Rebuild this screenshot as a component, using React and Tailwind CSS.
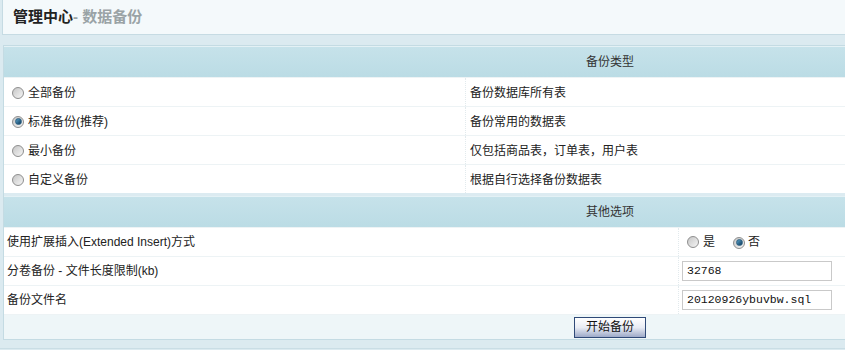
import React from "react"

function Radio({ checked }) {
	return (
		<span className="inline-flex w-[12px] h-[12px] shrink-0 items-center justify-center rounded-full border border-[#8e8e8e] bg-gradient-to-br from-[#c6c6c6] to-[#f6f6f6]">
			{checked && (
				<span className="w-[7px] h-[7px] rounded-full bg-gradient-to-br from-[#5aa4cc] to-[#0d3a5c] border border-[#2b5e80]" />
			)}
		</span>
	)
}

const types = [
	{ name: "全部备份", desc: "备份数据库所有表", checked: false },
	{ name: "标准备份(推荐)", desc: "备份常用的数据表", checked: true },
	{ name: "最小备份", desc: "仅包括商品表，订单表，用户表", checked: false },
	{ name: "自定义备份", desc: "根据自行选择备份数据表", checked: false },
]

function SectionHead({ title }) {
	return (
		<div className="h-[31px] flex items-center justify-center bg-gradient-to-b from-[#c6e2ea] to-[#bbdce5] border-t border-[#e4f1f5] text-[#333] text-[12px]">
			{title}
		</div>
	)
}

export default function App() {
	return (
		<div className="w-[845px] h-[350px] overflow-hidden bg-[#dbeaf0] font-['Liberation_Sans','Noto_Sans_CJK_SC',sans-serif] text-[12px] text-[#222]">
			<div className="h-[35px] ml-[2px] border-l border-b border-[#c6dbe3] bg-[#f4f9fb] flex items-center pl-[10px]">
				<span className="text-[15px] font-bold text-[#222]">管理中心</span>
				<span className="text-[15px] font-bold text-[#9aa3a6]">- 数据备份</span>
			</div>
			<div className="h-[10px]" />
			<div className="ml-[3px] w-[1214px] border border-[#c4dbe3] bg-white">
				<SectionHead title="备份类型" />
				{types.map((t, i) => (
					<div key={i} className="flex h-[29px] border-t border-[#edf3f5]">
						<div className="w-[461px] flex items-center gap-[4px] pl-[8px] pt-[1px]">
							<Radio checked={t.checked} />
							<span>{t.name}</span>
						</div>
						<div className="flex-1 flex items-center pl-[4px] pt-[1px] border-l border-dotted border-[#e2eaed]">
							{t.desc}
						</div>
					</div>
				))}
				<div className="h-[3px] bg-[#dcebf1]" />
				<SectionHead title="其他选项" />
				<div className="flex h-[29px] border-t border-[#edf3f5]">
					<div className="w-[674px] flex items-center pl-[3px]">使用扩展插入(Extended Insert)方式</div>
					<div className="flex-1 flex items-center pl-[8px] border-l border-dotted border-[#e2eaed]">
						<Radio checked={false} />
						<span className="ml-[4px]">是</span>
						<span className="ml-[18px]"><Radio checked={true} /></span>
						<span className="ml-[3px]">否</span>
					</div>
				</div>
				<div className="flex h-[29px] border-t border-[#edf3f5]">
					<div className="w-[674px] flex items-center pl-[3px]">分卷备份 - 文件长度限制(kb)</div>
					<div className="flex-1 flex items-center pl-[3px] border-l border-dotted border-[#e2eaed]">
						<div className="w-[150px] h-[20px] border border-[#c9c9c9] flex items-center pl-[4px] font-['Liberation_Mono',monospace] text-[11.5px] text-[#111]">32768</div>
					</div>
				</div>
				<div className="flex h-[29px] border-t border-[#edf3f5]">
					<div className="w-[674px] flex items-center pl-[3px]">备份文件名</div>
					<div className="flex-1 flex items-center pl-[3px] border-l border-dotted border-[#e2eaed]">
						<div className="w-[150px] h-[20px] border border-[#c9c9c9] flex items-center pl-[4px] font-['Liberation_Mono',monospace] text-[11.5px] text-[#111]">20120926ybuvbw.sql</div>
					</div>
				</div>
				<div className="h-[25px] bg-[#eef6f8] flex items-center justify-center border-t border-[#edf3f5]">
					<button className="w-[72px] h-[21px] border border-[#2f4a78] bg-gradient-to-b from-[#ffffff] via-[#e8ecf4] to-[#9eaac8] text-[12px] text-[#111] flex items-center justify-center">
						开始备份
					</button>
				</div>
			</div>
			<div className="h-[9px] border-b border-[#c9dde5]" />
		</div>
	)
}
